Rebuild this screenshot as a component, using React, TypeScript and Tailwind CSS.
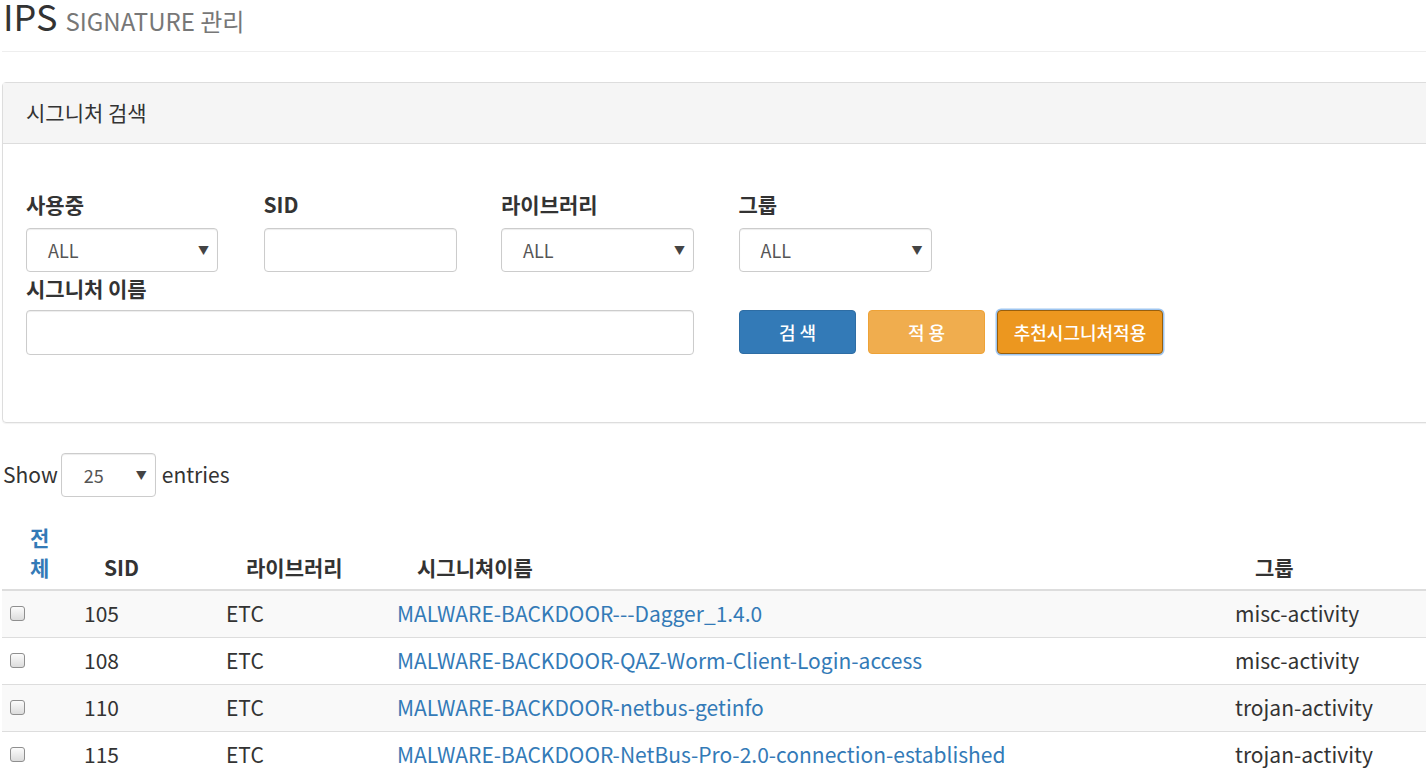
import React from "react";

const rows = [
  { sid: "105", lib: "ETC", name: "MALWARE-BACKDOOR---Dagger_1.4.0", group: "misc-activity" },
  { sid: "108", lib: "ETC", name: "MALWARE-BACKDOOR-QAZ-Worm-Client-Login-access", group: "misc-activity" },
  { sid: "110", lib: "ETC", name: "MALWARE-BACKDOOR-netbus-getinfo", group: "trojan-activity" },
  { sid: "115", lib: "ETC", name: "MALWARE-BACKDOOR-NetBus-Pro-2.0-connection-established", group: "trojan-activity" },
];

function Select({ value, w, pl }: { value: string; w: string; pl: string }) {
  return (
    <div
      className={`${w} h-[44px] border border-[#ccc] rounded-[4px] bg-white shadow-[inset_0_1px_1px_rgba(0,0,0,0.075)] flex items-center justify-between ${pl} pr-[8px]`}
    >
      <span className="text-[18px] text-[#555] leading-none">{value}</span>
      <span className="text-[11px] text-[#444] leading-none">▼</span>
    </div>
  );
}

function Field({ label, children }: { label: string; children: React.ReactNode }) {
  return (
    <div className="flex flex-col">
      <div className="text-[21px] font-bold text-[#333] leading-[24px] mb-[12px]">{label}</div>
      {children}
    </div>
  );
}

function Checkbox() {
  return (
    <div className="w-[15px] h-[15px] rounded-[3px] border border-[#8f8f8f] bg-gradient-to-b from-[#fcfcfc] to-[#dcdcdc]" />
  );
}

export default function App() {
  return (
    <div className="w-full overflow-hidden bg-white font-['Noto_Sans_CJK_KR','Noto_Sans',sans-serif] text-[#333]">
      <div className="w-[1460px] pl-[2px]">
        {/* Title */}
        <div className="h-[52px] border-b border-[#eee] flex items-start pt-[1px]">
          <h1 className="text-[36px] leading-[29px] text-[#333] pl-[1px]">
            IPS <span className="text-[24px] text-[#777]">SIGNATURE 관리</span>
          </h1>
        </div>

        {/* Panel */}
        <div className="mt-[30px] border border-[#ddd] rounded-[4px] shadow-[0_1px_1px_rgba(0,0,0,0.05)]">
          <div className="h-[61px] bg-[#f5f5f5] border-b border-[#ddd] flex items-center px-[23px] text-[21px] text-[#333]">
            시그니처 검색
          </div>
          <div className="pl-[23px] pt-[48px] pb-[67px]">
            <div className="grid grid-cols-[192px_192px_192px_192px] gap-x-[45.5px]">
              <Field label="사용중">
                <Select value="ALL" w="w-[192px]" pl="pl-[21px]" />
              </Field>
              <Field label="SID">
                <div className="w-[193px] h-[44px] border border-[#ccc] rounded-[4px] bg-white shadow-[inset_0_1px_1px_rgba(0,0,0,0.075)]" />
              </Field>
              <Field label="라이브러리">
                <Select value="ALL" w="w-[193px]" pl="pl-[21px]" />
              </Field>
              <Field label="그룹">
                <Select value="ALL" w="w-[193px]" pl="pl-[21px]" />
              </Field>
            </div>
            <div className="flex items-end mt-[4px]">
              <div className="flex flex-col">
                <div className="text-[21px] font-bold text-[#333] leading-[24px] mb-[10px]">시그니처 이름</div>
                <div className="w-[668px] h-[45px] border border-[#ccc] rounded-[4px] bg-white shadow-[inset_0_1px_1px_rgba(0,0,0,0.075)]" />
              </div>
              <div className="flex gap-[12px] ml-[45px] mb-[1px]">
                <button className="w-[117px] h-[44px] rounded-[4px] bg-[#337ab7] border border-[#2e6da4] text-white text-[18px] font-medium">
                  검 색
                </button>
                <button className="w-[117px] h-[44px] rounded-[4px] bg-[#f0ad4e] border border-[#eea236] text-white text-[18px] font-medium">
                  적 용
                </button>
                <button className="w-[166px] h-[44px] rounded-[4px] bg-[#ec971f] border border-[#985f0d] text-white text-[18px] font-medium shadow-[0_0_0_1.5px_#9ec5f0]">
                  추천시그니처적용
                </button>
              </div>
            </div>
          </div>
        </div>

        {/* Show entries */}
        <div className="mt-[30px] flex items-center h-[44px] text-[21px]">
          <span className="pl-[1px]">Show</span>
          <div className="ml-[3px]">
            <Select value="25" w="w-[95px]" pl="pl-[22px]" />
          </div>
          <span className="ml-[6px]">entries</span>
        </div>

        {/* Table */}
        <table className="mt-[25px] w-[1440px] table-fixed border-collapse text-[21px]">
          <colgroup>
            <col className="w-[74px]" />
            <col className="w-[142px]" />
            <col className="w-[171px]" />
            <col className="w-[838px]" />
            <col className="w-[215px]" />
          </colgroup>
          <thead>
            <tr className="border-b-2 border-[#ddd]">
              <th className="pl-[28px] pr-[8px] pb-[7px] text-left align-bottom font-bold text-[21px] leading-[30px]">
                <span className="inline-block w-[20px] text-[#337ab7]">전체</span>
              </th>
              <th className="pl-[28px] pb-[7px] text-left align-bottom font-bold text-[21px] leading-[30px]">SID</th>
              <th className="pl-[28px] pb-[7px] text-left align-bottom font-bold text-[21px] leading-[30px]">라이브러리</th>
              <th className="pl-[28px] pb-[7px] text-left align-bottom font-bold text-[21px] leading-[30px]">시그니쳐이름</th>
              <th className="pl-[28px] pb-[7px] text-left align-bottom font-bold text-[21px] leading-[30px]">그룹</th>
            </tr>
          </thead>
          <tbody>
            {rows.map((r, i) => (
              <tr key={r.sid} className={`h-[47px] border-t border-[#ddd] ${i % 2 === 0 ? "bg-[#f9f9f9]" : "bg-white"}`}>
                <td className="pl-[8px] align-middle">
                  <Checkbox />
                </td>
                <td className="pl-[8px] align-middle">{r.sid}</td>
                <td className="pl-[8px] align-middle">{r.lib}</td>
                <td className="pl-[8px] align-middle text-[#337ab7]">{r.name}</td>
                <td className="pl-[8px] align-middle">{r.group}</td>
              </tr>
            ))}
          </tbody>
        </table>
      </div>
    </div>
  );
}
